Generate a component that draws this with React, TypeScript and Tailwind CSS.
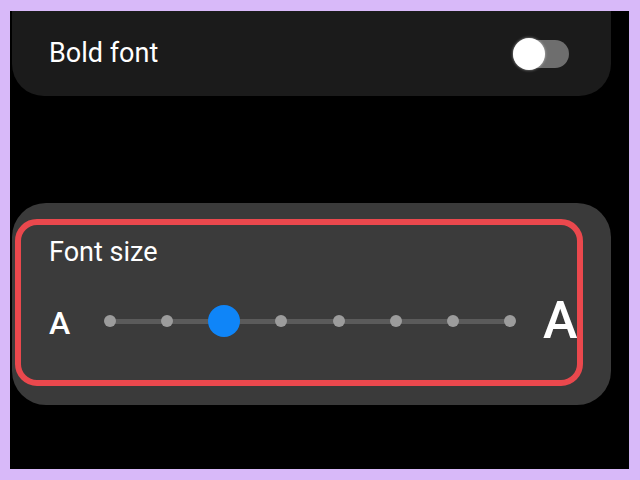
import React from 'react';

const font = { fontFamily: 'Roboto, "Noto Sans", sans-serif' };

function Toggle() {
  return (
    <div className="relative w-[56px] h-[28px] rounded-full bg-[#6e6e6e]">
      <div className="absolute left-0 top-[-2px] w-[32px] h-[32px] rounded-full bg-white shadow-[0_0_3px_rgba(255,255,255,0.6)]" />
    </div>
  );
}

function Slider({ steps, value }: { steps: number; value: number }) {
  return (
    <div className="relative w-[412px] h-[32px] flex items-center">
      <div className="absolute left-[6px] right-[6px] top-[13.5px] h-[5px] bg-[#5b5b5b]" />
      <div className="relative w-full flex items-center justify-between">
        {Array.from({ length: steps }).map((_, i) => (
          <div key={i} className="w-[12px] h-[12px] flex items-center justify-center">
            {i === value ? (
              <div className="shrink-0 w-[32px] h-[32px] rounded-full bg-[#0f85f8]" />
            ) : (
              <div className="shrink-0 w-[12px] h-[12px] rounded-full bg-[#9c9c9c]" />
            )}
          </div>
        ))}
      </div>
    </div>
  );
}

export default function App() {
  return (
    <div className="w-[640px] h-[480px] bg-[#d8b9f9] pt-[11px] pl-[10px] pr-[11px] pb-[11px]" style={font}>
      <div className="h-full bg-black flex flex-col pl-[2px] pr-[18px]">
        {/* Bold font row */}
        <div className="h-[85px] bg-[#1b1b1b] rounded-b-[32px] flex items-center justify-between pl-[37px] pr-[42px]">
          <span className="text-[27px] leading-[32px] text-white mt-[-2px]">Bold font</span>
          <Toggle />
        </div>

        {/* Font size card */}
        <div className="mt-[107px] h-[202px] bg-[#3a3a3a] rounded-[34px] pt-[16px] pl-[3px] pr-[28px]">
          <div className="h-[167px] border-[6px] border-[#ea484d] rounded-[22px] bg-[#3b3b3b] overflow-hidden pt-[11px] pl-[28px]">
            <div className="text-[27px] leading-[32px] text-white">Font size</div>
            <div className="mt-[27px] h-[52px] flex items-center">
              <span className="text-[32px] leading-none font-medium text-white mt-[3px] w-[22px] shrink-0">A</span>
              <div className="ml-[33px]">
                <Slider steps={8} value={2} />
              </div>
              <span className="ml-[27px] text-[52px] leading-none font-medium text-white shrink-0">A</span>
            </div>
          </div>
        </div>
      </div>
    </div>
  );
}
